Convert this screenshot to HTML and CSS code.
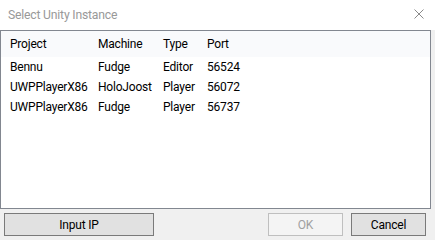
FILE: index.html
```html
<!DOCTYPE html>
<html lang="en">
<head>
  <meta charset="UTF-8" />
  <title>Select Unity Instance</title>
  <link rel="stylesheet" href="styles.css">
</head>
<body>
  <div class="dialog">
    <div class="titlebar">
      <span class="title">Select Unity Instance</span>
      <svg class="close" width="10" height="10" viewBox="0 0 10 10">
        <path d="M0.5 0.5 L9.5 9.5 M9.5 0.5 L0.5 9.5" stroke="#8a8a8a" stroke-width="1" fill="none" />
      </svg>
    </div>

    <div class="list">
      <div class="row header">
        <span>Project</span><span>Machine</span><span>Type</span><span>Port</span>
      </div>
      <div id="instanceList"></div>
    </div>

    <div class="footer">
      <button class="btn btn-wide">Input IP</button>
      <div class="right-buttons">
        <button class="btn" disabled>OK</button>
        <button class="btn">Cancel</button>
      </div>
    </div>
  </div>

  <script>
    // Instances found on the network
    const instances = [
      { project: 'Bennu', machine: 'Fudge', type: 'Editor', port: 56524 },
      { project: 'UWPPlayerX86', machine: 'HoloJoost', type: 'Player', port: 56072 },
      { project: 'UWPPlayerX86', machine: 'Fudge', type: 'Player', port: 56737 }
    ];

    document.getElementById('instanceList').innerHTML = instances.map(i => `
      <div class="row">
        <span>${i.project}</span><span>${i.machine}</span><span>${i.type}</span><span>${i.port}</span>
      </div>
    `).join('');
  </script>
</body>
</html>
```

FILE: styles.css
```css
* {
  margin: 0;
  padding: 0;
  box-sizing: border-box;
}

body {
  font-family: Roboto, "Noto Sans", sans-serif;
  font-size: 12px;
  letter-spacing: -0.2px;
  color: #000;
  background-color: #f0f0f0;
}

.dialog {
  width: 435px;
  height: 240px;
  display: flex;
  flex-direction: column;
}

.titlebar {
  height: 30px;
  display: flex;
  justify-content: space-between;
  align-items: center;
  padding: 0 11px 0 8px;
  background-color: white;
}

.title {
  color: #999;
  font-size: 12.2px;
}

.close {
  display: block;
  margin-top: -2px;
}

.list {
  height: 179px;
  margin-right: 4px;
  border: 1px solid #828790;
  background-color: white;
}

.row {
  display: grid;
  grid-template-columns: 88px 65px 44px 1fr;
  align-items: center;
  height: 20px;
  padding-left: 9px;
  white-space: nowrap;
}

.row.header {
  height: 26px;
  background-color: #f9fafc;
}

.footer {
  display: flex;
  justify-content: space-between;
  padding: 4px 9px 0 4px;
}

.right-buttons {
  display: flex;
  gap: 8px;
}

.btn {
  width: 75px;
  height: 23px;
  font-family: inherit;
  font-size: 12px;
  letter-spacing: inherit;
  color: #000;
  background-color: #e1e1e1;
  border: 1px solid #7a7a7a;
}

.btn-wide {
  width: 150px;
}

.btn:disabled {
  color: #a0a0a0;
  background-color: #f4f4f4;
  border-color: #bfbfbf;
}
```
